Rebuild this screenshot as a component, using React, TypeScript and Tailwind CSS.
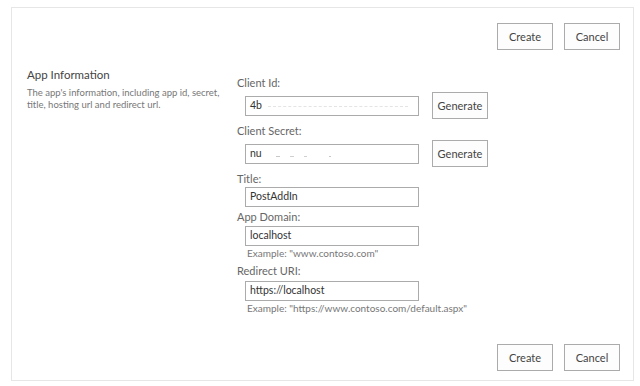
import React from "react";

const font = { fontFamily: 'Lato, "Open Sans", Arial, sans-serif' };

function Btn({ children }: { children: React.ReactNode }) {
  return (
    <button className="h-[27px] w-[56px] border border-[#ababab] bg-[#fdfdfd] text-[11px] text-[#444] leading-none">
      {children}
    </button>
  );
}

function Label({ children }: { children: React.ReactNode }) {
  return <div className="h-[16px] text-[11px] leading-[16px] text-[#666]">{children}</div>;
}

function Input({ value, redacted }: { value: string; redacted?: "dash" | "dots" }) {
  return (
    <div className="ml-[8px] flex h-[20px] w-[174px] items-center border border-[#ababab] bg-white pl-[4px] text-[10.5px] text-[#333]">
      <span>{value}</span>
      {redacted === "dash" && (
        <span className="ml-[6px] mt-[2px] h-0 w-[140px] border-t border-dashed border-[#e4e4e4]" />
      )}
      {redacted === "dots" && (
        <span className="ml-[14px] mt-[6px] flex gap-[10px]">
          <span className="h-[1px] w-[4px] bg-[#c8c8c8]" />
          <span className="h-[1px] w-[4px] bg-[#d0d0d0]" />
          <span className="h-[1px] w-[3px] bg-[#d0d0d0]" />
          <span className="ml-[12px] h-[1px] w-[2px] bg-[#c8c8c8]" />
        </span>
      )}
    </div>
  );
}

export default function App() {
  return (
    <div className="h-[386px] w-[640px] bg-white pl-[11px] pt-[7px]" style={font}>
      <div className="flex h-[374px] w-[623px] flex-col border border-[#e6e6e6] pl-[15px] pr-[13px] pt-[15px]">
        <div className="flex justify-end gap-[11px]">
          <Btn>Create</Btn>
          <Btn>Cancel</Btn>
        </div>
        <div className="mt-[17px] flex">
          <div className="w-[210px] shrink-0">
            <div className="text-[11.5px] leading-[16px] text-[#444]">App Information</div>
            <div className="mt-[4px] whitespace-nowrap text-[9.5px] leading-[12px] text-[#777]">
              The app's information, including app id, secret,
              <br />
              title, hosting url and redirect url.
            </div>
          </div>
          <div className="flex flex-col pt-[8px]">
            <Label>Client Id:</Label>
            <div className="mt-[1px] flex items-center">
              <Input value="4b" redacted="dash" />
              <div className="ml-[13px]">
                <Btn>Generate</Btn>
              </div>
            </div>
            <div className="mt-[4px]">
              <Label>Client Secret:</Label>
            </div>
            <div className="mt-[1px] flex items-center">
              <Input value="nu" redacted="dots" />
              <div className="ml-[13px]">
                <Btn>Generate</Btn>
              </div>
            </div>
            <div className="mt-[4px]">
              <Label>Title:</Label>
            </div>
            <div className="mt-[0px]">
              <Input value="PostAddIn" />
            </div>
            <div className="mt-[2px]">
              <Label>App Domain:</Label>
            </div>
            <div className="mt-[1px]">
              <Input value="localhost" />
            </div>
            <div className="ml-[10px] h-[15px] text-[10px] leading-[15px] text-[#777]">Example: "www.contoso.com"</div>
            <div className="mt-[2px]">
              <Label>Redirect URI:</Label>
            </div>
            <div className="mt-[2px]">
              <Input value="https://localhost" />
            </div>
            <div className="ml-[10px] h-[15px] text-[10px] leading-[15px] text-[#777]">
              Example: "https://www.contoso.com/default.aspx"
            </div>
          </div>
        </div>
        <div className="mt-auto mb-[9px] flex justify-end gap-[11px]">
          <Btn>Create</Btn>
          <Btn>Cancel</Btn>
        </div>
      </div>
    </div>
  );
}
